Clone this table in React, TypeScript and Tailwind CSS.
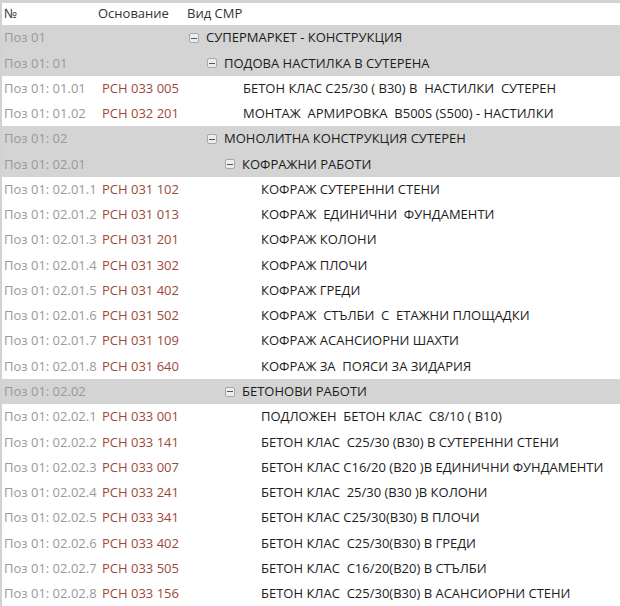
import React from "react";

type Row = {
  code: string;
  base?: string;
  title: string;
  level: number;
  group?: boolean;
};

const rows: Row[] = [
  { code: "Поз 01", title: "СУПЕРМАРКЕТ - КОНСТРУКЦИЯ", level: 0, group: true },
  { code: "Поз 01: 01", title: "ПОДОВА НАСТИЛКА В СУТЕРЕНА", level: 1, group: true },
  { code: "Поз 01: 01.01", base: "РСН 033 005", title: "БЕТОН КЛАС С25/30 ( В30) В  НАСТИЛКИ  СУТЕРЕН", level: 2 },
  { code: "Поз 01: 01.02", base: "РСН 032 201", title: "МОНТАЖ  АРМИРОВКА  B500S (S500) - НАСТИЛКИ", level: 2 },
  { code: "Поз 01: 02", title: "МОНОЛИТНА КОНСТРУКЦИЯ СУТЕРЕН", level: 1, group: true },
  { code: "Поз 01: 02.01", title: "КОФРАЖНИ РАБОТИ", level: 2, group: true },
  { code: "Поз 01: 02.01.1", base: "РСН 031 102", title: "КОФРАЖ СУТЕРЕННИ СТЕНИ", level: 3 },
  { code: "Поз 01: 02.01.2", base: "РСН 031 013", title: "КОФРАЖ  ЕДИНИЧНИ  ФУНДАМЕНТИ", level: 3 },
  { code: "Поз 01: 02.01.3", base: "РСН 031 201", title: "КОФРАЖ КОЛОНИ", level: 3 },
  { code: "Поз 01: 02.01.4", base: "РСН 031 302", title: "КОФРАЖ ПЛОЧИ", level: 3 },
  { code: "Поз 01: 02.01.5", base: "РСН 031 402", title: "КОФРАЖ ГРЕДИ", level: 3 },
  { code: "Поз 01: 02.01.6", base: "РСН 031 502", title: "КОФРАЖ  СТЪЛБИ  С  ЕТАЖНИ ПЛОЩАДКИ", level: 3 },
  { code: "Поз 01: 02.01.7", base: "РСН 031 109", title: "КОФРАЖ АСАНСИОРНИ ШАХТИ", level: 3 },
  { code: "Поз 01: 02.01.8", base: "РСН 031 640", title: "КОФРАЖ ЗА  ПОЯСИ ЗА ЗИДАРИЯ", level: 3 },
  { code: "Поз 01: 02.02", title: "БЕТОНОВИ РАБОТИ", level: 2, group: true },
  { code: "Поз 01: 02.02.1", base: "РСН 033 001", title: "ПОДЛОЖЕН  БЕТОН КЛАС  С8/10 ( В10)", level: 3 },
  { code: "Поз 01: 02.02.2", base: "РСН 033 141", title: "БЕТОН КЛАС  С25/30 (В30) В СУТЕРЕННИ СТЕНИ", level: 3 },
  { code: "Поз 01: 02.02.3", base: "РСН 033 007", title: "БЕТОН КЛАС С16/20 (В20 )В ЕДИНИЧНИ ФУНДАМЕНТИ", level: 3 },
  { code: "Поз 01: 02.02.4", base: "РСН 033 241", title: "БЕТОН КЛАС  25/30 (В30 )В КОЛОНИ", level: 3 },
  { code: "Поз 01: 02.02.5", base: "РСН 033 341", title: "БЕТОН КЛАС С25/30(В30) В ПЛОЧИ", level: 3 },
  { code: "Поз 01: 02.02.6", base: "РСН 033 402", title: "БЕТОН КЛАС  С25/30(В30) В ГРЕДИ", level: 3 },
  { code: "Поз 01: 02.02.7", base: "РСН 033 505", title: "БЕТОН КЛАС  С16/20(В20) В СТЪЛБИ", level: 3 },
  { code: "Поз 01: 02.02.8", base: "РСН 033 156", title: "БЕТОН КЛАС  С25/30(В30) В АСАНСИОРНИ СТЕНИ", level: 3 },
];

// tree indent per level (18px steps)
const indentClass = ["pl-[2px]", "pl-[20px]", "pl-[38px]", "pl-[56px]"];

const MinusBox = () => (
  <span className="w-[10px] h-[10px] mr-[7px] rounded-[2px] border border-[#a8a8a8] bg-[#ececec] flex items-center justify-center shrink-0">
    <span className="w-[6px] h-[1px] bg-[#555]" />
  </span>
);

export default function App() {
  return (
    <div
      className="w-[620px] h-[606px] overflow-hidden bg-white border-t-[3px] border-l-[2px] border-[#d2d2d2] text-[13px] whitespace-pre"
      style={{ fontFamily: '"Open Sans", "Noto Sans", sans-serif' }}
    >
      {/* header */}
      <div className="flex items-center h-[22.4px] text-[#333]">
        <div className="w-[96px] pl-[2px]">№</div>
        <div className="w-[89px]">Основание</div>
        <div className="flex-1">Вид СМР</div>
      </div>

      {rows.map((r, i) => (
        <div
          key={i}
          className={`flex items-center h-[25.27px] ${r.group ? "bg-[#d4d4d4]" : ""}`}
        >
          <div className="w-[100px] pl-[2px] text-[#999]">{r.code}</div>
          <div className="w-[85px] text-[#9c4a38]">{r.base ?? ""}</div>
          <div className={`flex-1 flex items-center text-[#1c1c1c] ${indentClass[r.level]}`}>
            {r.group ? <MinusBox /> : <span className="w-[18px] shrink-0" />}
            <span>{r.title}</span>
          </div>
        </div>
      ))}
    </div>
  );
}
